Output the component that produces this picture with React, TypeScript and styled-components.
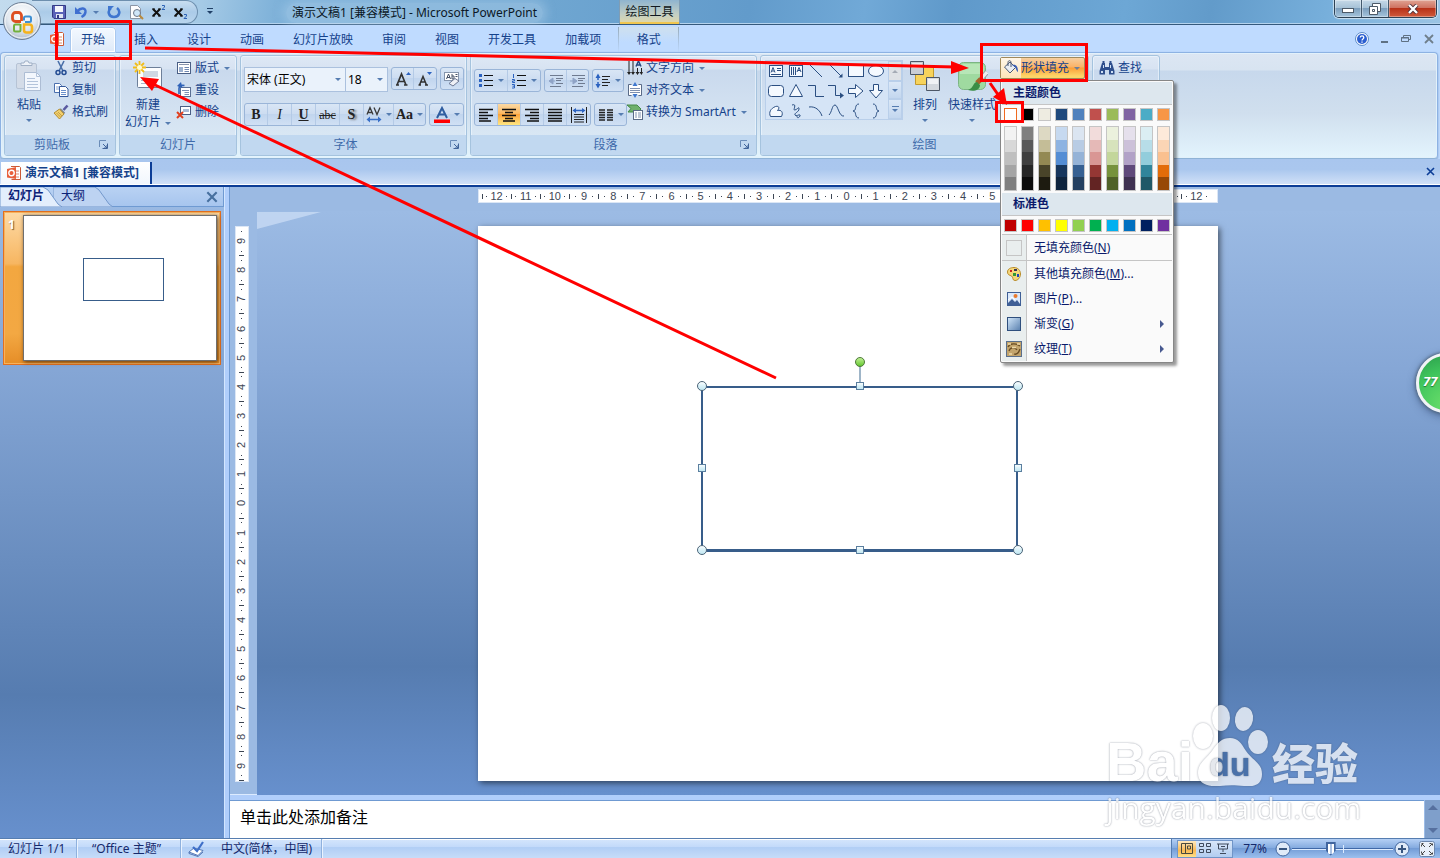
import React from 'react';
import styled, { createGlobalStyle, css } from 'styled-components';

const GlobalStyle = createGlobalStyle`
  *, *::before, *::after { box-sizing: border-box; }
  body {
    margin: 0;
    font-family: "Noto Sans", "Noto Sans CJK SC", sans-serif;
    font-size: 12px;
    line-height: 16px;
    color: #15428b;
    background: #bfdbff;
  }
  button, select, textarea, input { font: inherit; color: inherit; }
  button { background: none; border: 0; padding: 0; margin: 0; }
  svg { display: block; flex: none; }
`;

/* ---------- shell ---------- */

const Window = styled.div`
  position: relative;
  display: flex;
  flex-direction: column;
  min-height: 100vh;
  overflow: hidden;
`;

const Caret = styled.span`
  flex: none;
  width: 0;
  height: 0;
  border: 3px solid transparent;
  border-top-color: #567db1;
  border-bottom-width: 0;
`;

/* ---------- title bar ---------- */

const TitleBar = styled.header`
  display: flex;
  height: 25px;
  border-bottom: 1px solid #35597c;
  box-shadow: inset 0 -1px 0 #b4d3ee;
  background: linear-gradient(100deg, #c3dbee 0, #a5cae6 14%, #79aed7 20%, #6fa6d1 38%, #629bcb 52%, #71a9d7 60%, #5f99ca 66%, #6da7d5 78%, #629bca 84%, #77afdb 92%, #9bc4e4 100%);
`;

const TitleLeft = styled.div`
  display: flex;
  align-items: center;
  width: 619px;
  padding-left: 32px;
`;

const QuickBar = styled.div`
  display: flex;
  align-items: center;
  gap: 8px;
  width: 166px;
  height: 24px;
  padding-left: 20px;
  border: 1px solid #6d8fae;
  border-left: 0;
  border-radius: 0 12px 12px 0;
  background: linear-gradient(#c9def0, #abcbe8 50%, #b9d5ee);
`;

const IconButton = styled.button`
  display: flex;
  align-items: center;
  justify-content: center;
  height: 20px;
  min-width: 10px;
`;

const SplitCaret = styled(IconButton)`
  margin: 0 -2px 0 -5px;
`;

const WindowTitle = styled.h1`
  margin: 2px 0 0 64px;
  padding: 0 6px;
  font-size: 12px;
  font-weight: 400;
  line-height: 20px;
  color: #0b1826;
  white-space: nowrap;
  border-radius: 10px;
  background: rgba(190, 218, 240, 0.35);
  box-shadow: 0 0 10px 4px rgba(190, 218, 240, 0.35);
`;

const ContextTitle = styled.div`
  width: 61px;
  text-align: center;
  white-space: nowrap;
  line-height: 23px;
  color: #101820;
  border: 0 solid #7f9db5;
  border-width: 0 1px;
  box-shadow: inset 0 -2px 0 #f0c64e;
  background: linear-gradient(#8fb4cf, #c3cfc4 60%, #e3d9a6);
`;

const WindowButtons = styled.div`
  display: flex;
  align-self: flex-start;
  margin-left: auto;
  margin-right: 3px;
  border: 1px solid #2d4154;
  border-top: 0;
  border-radius: 0 0 5px 5px;
  overflow: hidden;
  box-shadow: 0 0 1px 1px rgba(255, 255, 255, 0.6);
`;

const WindowButton = styled.button<{ $close?: boolean }>`
  display: flex;
  align-items: center;
  justify-content: center;
  width: ${p => (p.$close ? 47 : 27)}px;
  height: 17px;
  border-right: ${p => (p.$close ? 0 : 1)}px solid #43596c;
  box-shadow: inset 0 0 0 1px rgba(255, 255, 255, 0.35);
  background: ${p => p.$close
    ? 'linear-gradient(#e0a493, #cf7260 45%, #b83218 50%, #cf5a3c)'
    : 'linear-gradient(#c6d9e8, #a7c2d7 45%, #7d9fbd 50%, #a5c4dc)'};
`;

const Orb = styled.button`
  position: absolute;
  left: 2px;
  top: 1px;
  z-index: 3;
`;

/* ---------- tab row ---------- */

const TabRow = styled.nav`
  display: flex;
  align-items: flex-end;
  gap: 1px;
  height: 27px;
  padding-left: 49px;
  background: #bfdbff;
`;

const RibbonTab = styled.button<{ $active?: boolean }>`
  height: 25px;
  margin: 0 3px;
  padding: 0 11px;
  white-space: nowrap;
  border-radius: 4px 4px 0 0;
  ${p => p.$active && css`
    position: relative;
    z-index: 1;
    height: 26px;
    margin-bottom: -1px;
    box-shadow: inset 0 0 0 1px #a9c8ee, inset 0 0 0 2px #fff;
    background: linear-gradient(#f4f9ff, #dde9f8);
  `}
`;

const ContextTab = styled(RibbonTab)`
  width: 61px;
  margin: 0;
  margin-left: 2px;
  border-radius: 0;
  border: solid;
  border-width: 0 1px;
  border-image: linear-gradient(#93a9bd, rgba(147, 169, 189, 0)) 1;
  background: linear-gradient(#cfe0ee, #bfdbff 60%);
`;

const TabIcon = styled.span`
  display: flex;
  align-self: center;
  width: 17px;
`;

const MdiButtons = styled.div`
  display: flex;
  align-self: center;
  align-items: center;
  gap: 8px;
  margin-left: auto;
  padding-right: 4px;
`;

/* ---------- ribbon ---------- */

const Ribbon = styled.section`
  display: flex;
  gap: 3px;
  height: 107px;
  margin-right: 2px;
  padding: 2px 3px;
  border: 1px solid #8db2e3;
  border-bottom-color: #8fb3d6;
  border-radius: 4px;
  box-shadow: 0 1px 2px #7d9cc4, inset 0 0 0 1px #e2f1fb;
  background: linear-gradient(#dce6f3, #d8e4f1 17px, #c7d8ec 18px, #d0dfee 60px, #e3f4fd 100%);
`;

const Group = styled.div<{ $w: number }>`
  display: flex;
  flex: none;
  flex-direction: column;
  width: ${p => p.$w}px;
  border: 1px solid #a5c3de;
  border-radius: 3px;
  box-shadow: inset 0 0 0 1px rgba(240, 248, 255, 0.6);
  background: linear-gradient(#dee8f5, #d7e3f2 13px, #c9d9ed 14px, #d9e7f4 80px);
`;

const GroupBody = styled.div`
  display: flex;
  flex: 1;
  padding: 1px 3px 0;
`;

const GroupLabel = styled.div`
  display: flex;
  align-items: center;
  height: 20px;
  color: #3e6aaa;
  background: #c1d8f0;
  border-radius: 0 0 2px 2px;
  span { flex: 1; text-align: center; }
`;

const Launcher = styled.button`
  width: 16px;
  height: 16px;
`;

const Column = styled.div`
  display: flex;
  flex-direction: column;
`;

const BigButton = styled.button<{ $w: number }>`
  display: flex;
  flex-direction: column;
  align-items: center;
  width: ${p => p.$w}px;
  height: 76px;
  padding-top: 3px;
  white-space: nowrap;
  svg { margin-bottom: 5px; }
  ${Caret} { margin-top: 6px; }
`;

const CaretLine = styled.span`
  display: flex;
  align-items: center;
  gap: 4px;
  margin-top: 1px;
  && ${Caret} { margin-top: 2px; }
`;

const SmallButton = styled.button`
  display: flex;
  align-items: center;
  gap: 3px;
  height: 22px;
  white-space: nowrap;
  ${Caret} { margin-left: 2px; }
`;

const FontBody = styled(Column)`
  gap: 11px;
  padding-top: 10px;
`;

const ParaBody = styled(Column)`
  gap: 11px;
  padding-top: 12px;
`;

const Row = styled.div`
  display: flex;
  gap: 3px;
`;

const Combo = styled.label<{ $w: number }>`
  display: grid;
  width: ${p => p.$w}px;
  height: 25px;
  align-items: center;
  border: 1px solid #abc1de;
  background: #eaf2fb;
  & + & { margin-left: -4px; }
  select, ${Caret} { grid-area: 1 / 1; }
  select {
    width: 100%;
    padding: 0 2px;
    appearance: none;
    border: 0;
    background: none;
    color: #000;
  }
  ${Caret} { justify-self: end; margin-right: 4px; }
`;

const ButtonSet = styled.div`
  display: flex;
  height: 23px;
  border: 1px solid #9ab5d8;
  border-radius: 3px;
  overflow: hidden;
  background: linear-gradient(#d9e6f5, #ccdcf1 48%, #c1d5ee 50%, #d0e0f4);
`;

const Tool = styled.button<{ $w?: number; $on?: boolean }>`
  display: flex;
  align-items: center;
  justify-content: center;
  gap: 4px;
  width: ${p => p.$w ?? 23}px;
  font-family: "Liberation Serif", serif;
  font-size: 14px;
  color: #222;
  border-right: 1px solid #b4cae6;
  &:last-child { border-right: 0; }
  ${p => p.$on && css`background: linear-gradient(#fbd9a5, #fbb65c 48%, #fca43c 50%, #fee782);`}
`;

const Glyph = styled.span<{ $size?: number; $style?: 'bold' | 'italic' | 'underline' | 'strike' | 'shadow' }>`
  font-size: ${p => p.$size ?? 14}px;
  font-weight: ${p => (p.$style === 'italic' || p.$style === 'strike' ? 400 : 700)};
  font-style: ${p => (p.$style === 'italic' ? 'italic' : 'normal')};
  text-decoration: ${p => (p.$style === 'underline' ? 'underline' : p.$style === 'strike' ? 'line-through' : 'none')};
  text-shadow: ${p => (p.$style === 'shadow' ? '2px 1px 2px #777' : 'none')};
`;

const SideColumn = styled(Column)`
  padding-left: 3px;
`;

const Gallery = styled.div`
  display: flex;
  height: 60px;
  margin: 3px 0 0 1px;
  border: 1px solid #b9cfea;
  background: #d5e4f6;
`;

const ShapeGrid = styled.div`
  display: grid;
  grid-template-columns: repeat(6, 20px);
  grid-auto-rows: 20px;
  padding-right: 2px;
  button { display: flex; align-items: center; justify-content: center; }
`;

const GalleryScroll = styled.div`
  display: grid;
  grid-template-rows: 20px 18px 20px;
  width: 14px;
  button {
    display: flex;
    flex-direction: column;
    align-items: center;
    justify-content: center;
    gap: 2px;
    border: 1px solid #b9cfea;
    background: linear-gradient(#dbe8f7, #c3d7ef);
  }
  button:first-child { background: #dfe2e6; }
`;

const UpCaret = styled(Caret)`
  border: 3px solid transparent;
  border-top-width: 0;
  border-bottom-color: #a5abb5;
`;

const FillAnchor = styled.div`
  position: relative;
  z-index: 4;
  margin-left: auto;
`;

const FillButton = styled.button`
  display: flex;
  align-items: center;
  width: 85px;
  height: 22px;
  white-space: nowrap;
  border: 1px solid #a08a5c;
  border-radius: 2px;
  background: linear-gradient(#f6cfa0, #fbb266 45%, #fb9e38 50%, #fdd568 90%);
  svg { width: 20px; height: 20px; padding: 2px; background: linear-gradient(#fff6e8, #fde5b8); }
  ${Caret} { margin-left: 5px; border-top-color: #6c7f9b; }
`;

/* ---------- colour menu ---------- */

const Menu = styled.div`
  position: absolute;
  left: 0;
  top: 23px;
  width: 174px;
  padding: 1px;
  color: #0a1a6b;
  border: 1px solid #868686;
  border-radius: 2px;
  background: #fafafa;
  box-shadow: 3px 3px 3px rgba(0, 0, 0, 0.4);
`;

const MenuHeading = styled.h2`
  margin: 0;
  padding-left: 11px;
  font-size: 12px;
  font-weight: 700;
  line-height: 22px;
  background: #dde7ee;
  border-bottom: 1px solid #c5c5c5;
`;

const SwatchRow = styled.div`
  display: grid;
  grid-template-columns: repeat(10, 13px);
  column-gap: 4px;
  padding: 3px 2px 2px;
`;

const Swatch = styled.button<{ $c: string; $selected?: boolean }>`
  height: 13px;
  border: 1px solid ${p => (p.$selected ? '#f06a20' : '#c5c5c5')};
  background: ${p => p.$c};
`;

const ShadeColumn = styled.div`
  display: flex;
  flex-direction: column;
  height: 65px;
  border: 1px solid #c5c5c5;
`;

const Shade = styled.button<{ $c: string }>`
  flex: 1;
  background: ${p => p.$c};
`;

const MenuItem = styled.button<{ $divided?: boolean }>`
  display: flex;
  align-items: center;
  width: 100%;
  height: 25px;
  text-align: left;
  ${p => p.$divided && css`
    height: 27px;
    border: solid #c5c5c5;
    border-width: 1px 0;
  `}
`;

const MenuGutter = styled.span`
  display: flex;
  align-items: center;
  justify-content: center;
  align-self: stretch;
  width: 25px;
  margin-right: 7px;
  border-right: 1px solid #c5c5c5;
  background: #e9eeee;
`;

const EmptySwatch = styled.span`
  width: 16px;
  height: 16px;
  border: 1px solid #c5c5c5;
`;

const SubArrow = styled.span`
  margin: 0 8px 0 auto;
  border: 4px solid transparent;
  border-left-color: #47598f;
  border-right-width: 0;
`;

/* ---------- document bar ---------- */

const DocBar = styled.div`
  display: flex;
  align-items: flex-start;
  height: 28px;
  padding: 3px 1px 0;
  border-bottom: 2px solid #0c3d96;
  box-shadow: inset 0 -1px 0 #fff;
  background: linear-gradient(#a9c6ee 0, #aac7ee 40%, #d3e2f8);
`;

const DocTab = styled.button`
  display: flex;
  align-items: center;
  gap: 3px;
  height: 22px;
  padding: 0 11px 0 5px;
  font-weight: 700;
  white-space: nowrap;
  border-right: 2px solid #0c3d96;
  background: linear-gradient(#fff, #f1f6fd);
`;

const DocClose = styled.button`
  width: 9px;
  height: 19px;
  margin-left: auto;
  margin-right: 4px;
`;

/* ---------- body ---------- */

const Body = styled.div`
  display: flex;
  flex: 1;
  min-height: 640px;
`;

const deskGradient = 'linear-gradient(#9cbbe4 0, #86a7d6 27%, #567cb0 78%, #6790cd 100%)';

const SlidesPane = styled.aside`
  display: flex;
  flex-direction: column;
  flex: none;
  width: 224px;
  background: ${deskGradient};
`;

const PaneTabs = styled.div`
  display: flex;
  height: 20px;
  border: 1px solid #6f9ad2;
  border-width: 0 1px 1px 0;
  background: linear-gradient(#b9d2f3, #a7c5ee);
`;

const PaneTab = styled.button<{ $active?: boolean }>`
  position: relative;
  z-index: ${p => (p.$active ? 1 : 0)};
  padding: 0 16px 2px 8px;
  margin-right: -7px;
  font-weight: ${p => (p.$active ? 700 : 400)};
  color: #0c2277;
  white-space: nowrap;
  svg { position: absolute; left: 0; top: 0; z-index: -1; }
`;

const PaneClose = styled.button`
  margin: 0 5px 0 auto;
`;

const ThumbCard = styled.button`
  display: flex;
  align-items: stretch;
  width: 218px;
  height: 154px;
  margin: 4px 3px;
  border: 1px solid #e2701f;
  box-shadow: inset 0 0 0 1px #f7b25c;
  background: linear-gradient(#fddaa6, #f7b661 34%, #f3a740 36%, #f3a843 80%, #e58d27);
`;

const ThumbNumber = styled.span`
  width: 19px;
  padding: 5px 0 0 4px;
  text-align: left;
  font-weight: 700;
  color: #fff;
  text-shadow: 1px 1px 1px #7a5a2a;
`;

const ThumbSlide = styled.span`
  position: relative;
  width: 194px;
  height: 146px;
  margin-top: 3px;
  border: 1px solid #6f6f6f;
  background: #fff;
  box-shadow: 1px 1px 4px rgba(60, 30, 0, 0.8);
`;

const ThumbShape = styled.span`
  position: absolute;
  left: 59px;
  top: 42px;
  width: 81px;
  height: 43px;
  border: 1px solid #385d8a;
`;

const Splitter = styled.div`
  flex: none;
  width: 6px;
  border: 1px solid #d3e6ff;
  border-width: 0 1px;
  border-right-color: #6f9ad2;
  background: #b0cefb;
`;

const Editor = styled.main`
  display: flex;
  flex: 1;
  flex-direction: column;
  min-width: 0;
`;

const Desk = styled.div`
  display: grid;
  grid-template-columns: 27px 1fr;
  grid-template-rows: 24px 1fr;
  flex: 1;
  background: #9bbae3;
`;

const HRulerCell = styled.div`
  grid-column: 2;
  display: flex;
  align-items: center;
  justify-content: center;
  padding: 0 2px 6px 0;
`;

const HRuler = styled.div`
  display: flex;
  width: 740px;
  height: 14px;
  padding: 0 6px 0 3px;
  background: #fff;
  border: 1px solid #dbe6f5;
`;

const VRulerCell = styled.div`
  display: flex;
  justify-content: center;
  padding: 15px 4px 0 0;
`;

const VRuler = styled.div`
  display: flex;
  flex-direction: column;
  width: 14px;
  height: 556px;
  background: #fff;
  border: 1px solid #dbe6f5;
`;

const Mark = styled.span<{ $vertical?: boolean }>`
  display: flex;
  flex: 1;
  flex-direction: ${p => (p.$vertical ? 'column-reverse' : 'row')};
  align-items: center;
  justify-content: space-between;
  min-width: 0;
  min-height: 0;
  font-family: "Liberation Sans", sans-serif;
  font-size: 11px;
  line-height: 12px;
  color: #3d4654;
  b { width: 1px; height: 1px; flex: none; background: #3d4654; }
  i {
    flex: none;
    width: ${p => (p.$vertical ? 5 : 1)}px;
    height: ${p => (p.$vertical ? 1 : 5)}px;
    background: #3d4654;
  }
  span { ${p => p.$vertical && 'transform: rotate(-90deg);'} }
`;

const Stage = styled.div`
  position: relative;
  display: flex;
  justify-content: center;
  align-items: flex-start;
  padding: 15px 2px 14px 0;
  background: ${deskGradient};
`;

const Sheen = styled.svg`
  position: absolute;
  left: 0;
  top: 1px;
`;

const Slide = styled.div`
  position: relative;
  width: 740px;
  height: 555px;
  background: #fff;
  box-shadow: 2px 2px 6px rgba(0, 0, 0, 0.55);
`;

const SelectedShape = styled.div`
  position: absolute;
  left: 223px;
  top: 160px;
  width: 317px;
  height: 166px;
  border: 2px solid #385d8a;
  border-bottom-width: 3px;
  svg { position: absolute; left: -8px; top: -32px; }
`;

const NotesRow = styled.div`
  display: flex;
  height: 43px;
  border: solid;
  border-width: 5px 0 0;
  border-color: #b0cefb;
  box-shadow: 0 -1px 0 #dcebff;
  background: #fff;
`;

const Notes = styled.textarea`
  flex: 1;
  height: 37px;
  padding: 5px 10px;
  font-size: 16px;
  line-height: 22px;
  color: #000;
  resize: none;
  border: 0;
  outline: 0;
  overflow: hidden;
  border-top: 1px solid #6f9ad2;
  background: #fff;
`;

const NotesScroll = styled.div`
  display: flex;
  flex-direction: column;
  justify-content: space-between;
  align-items: center;
  width: 16px;
  padding: 5px 0;
  border-left: 1px solid #9dbce6;
  background: #7f9fcb;
  span { border: 5px solid transparent; border-bottom-color: #56709f; border-top-width: 0; }
  span:last-child { border-width: 5px 5px 0; border-top-color: #56709f; }
`;

/* ---------- status bar ---------- */

const StatusBar = styled.footer`
  display: flex;
  align-items: stretch;
  height: 20px;
  color: #15296b;
  border-top: 1px solid #567db0;
  box-shadow: inset 0 1px 0 #fff;
  background: linear-gradient(#d5e6fc, #c3dafa 40%, #b1cef5 45%, #c6dcf9);
`;

const StatusCell = styled.div<{ $w: number; $pad: number }>`
  display: flex;
  align-items: center;
  gap: 16px;
  width: ${p => p.$w}px;
  padding-left: ${p => p.$pad}px;
  line-height: 18px;
  white-space: nowrap;
  border-right: 1px solid #8fb1de;
  box-shadow: 1px 0 0 #eaf3ff;
`;

const StatusRight = styled.div`
  display: flex;
  align-items: center;
  gap: 8px;
  margin-left: auto;
  padding: 0 4px 0 5px;
  border-left: 1px solid #567db0;
  background: linear-gradient(#b5d0f5, #86ace0 45%, #739cd6 50%, #9cc0ee);
`;

const ViewButtons = styled.div`
  display: flex;
  height: 18px;
  margin-right: 2px;
  border: 1px solid #7095c8;
  background: linear-gradient(#d8e6f8, #b3cdf0);
`;

const ViewButton = styled.button<{ $on?: boolean }>`
  display: flex;
  align-items: center;
  justify-content: center;
  width: 18px;
  ${p => p.$on && css`background: linear-gradient(#fde8bf, #f9b851 60%, #fee18a);`}
`;

const ZoomSlider = styled.input`
  appearance: none;
  width: 101px;
  height: 16px;
  margin: 0 -7px;
  background:
    linear-gradient(#dcebff, #dcebff) 51px 50% / 1px 8px no-repeat,
    linear-gradient(#3f68a8 50%, #dcebff 50%) 0 50% / 100% 2px no-repeat;
  &::-webkit-slider-thumb {
    appearance: none;
    width: 10px;
    height: 14px;
    border: 2px solid #41669f;
    clip-path: polygon(0 0, 100% 0, 100% 65%, 50% 100%, 0 65%);
    background: linear-gradient(90deg, #fff 30%, #a9c1e4 30% 70%, #fff 70%);
  }
`;

/* ---------- overlays ---------- */

const Annotations = styled.svg`
  position: absolute;
  left: 0;
  top: 0;
  z-index: 6;
  pointer-events: none;
`;

const FloatBall = styled.div`
  position: absolute;
  right: -36px;
  top: 353px;
  z-index: 5;
  width: 60px;
  height: 60px;
  padding-left: 4px;
  font-size: 13px;
  font-weight: 700;
  font-style: italic;
  line-height: 50px;
  color: #fff;
  border: 3px solid #f1f3f5;
  border-radius: 50%;
  background: radial-gradient(circle at 50% 90%, #6ade6a, #3fc45c 60%, #2a9d4b);
  box-shadow: 0 0 3px 1px #51687f, 0 3px 8px rgba(30, 50, 90, 0.5);
  text-shadow: 0 1px 1px #1c7534;
`;

const Watermark = styled.div`
  position: absolute;
  right: 78px;
  bottom: 32px;
  z-index: 5;
  width: 256px;
  color: #fff;
  opacity: 0.74;
  pointer-events: none;
  text-shadow: 0 0 2px rgba(60, 70, 90, 0.6), 0 0 1px rgba(60, 70, 90, 0.4);
  svg { filter: drop-shadow(0 0 1px rgba(60, 70, 90, 0.6)); }
`;

const MarkRow = styled.div`
  display: flex;
  align-items: flex-end;
  height: 88px;
  padding-bottom: 4px;
`;

const MarkLatin = styled.span`
  width: 86px;
  font-family: "Liberation Sans", sans-serif;
  font-size: 56px;
  font-weight: 700;
  line-height: 48px;
`;

const MarkHan = styled.span`
  margin-left: 4px;
  font-family: "Noto Sans CJK SC", sans-serif;
  font-size: 43px;
  font-weight: 900;
  line-height: 50px;
`;

const MarkUrl = styled.div`
  font-family: "Open Sans", sans-serif;
  font-size: 30px;
  line-height: 36px;
`;

/* ---------- icons ---------- */

type IconProps = { children: React.ReactNode; w?: number; h?: number; box?: string };
const Icon = ({ children, w = 16, h = 16, box }: IconProps) => (
  <svg width={w} height={h} viewBox={box ?? `0 0 ${w} ${h}`} fill="none" aria-hidden="true">{children}</svg>
);

const OfficeOrb = () => (
  <Icon w={40} h={40}>
    <defs>
      <radialGradient id="orb" cx="50%" cy="35%" r="65%">
        <stop offset="0" stopColor="#fff" /><stop offset="0.6" stopColor="#e3e9f0" /><stop offset="1" stopColor="#aebccc" />
      </radialGradient>
    </defs>
    <circle cx="20" cy="20" r="18.5" fill="url(#orb)" stroke="#6e7f95" />
    <circle cx="20" cy="20" r="17" stroke="#fff" strokeOpacity="0.8" />
    <path d="M19 20.500h-5.500a3 3 0 0 1-3-3v-3a3 3 0 0 1 3-3h3a3 3 0 0 1 3 3V20" stroke="#dd4f22" strokeWidth="2.800" />
    <path d="M22 19.500v-2.500q0-1.500 1.500-1.500h4q1.500 0 1.500 1.500v2.500q0 1.500-1.500 1.500H23" stroke="#3f8fd2" strokeWidth="2" />
    <path d="M18.500 23v6q0 1.500-1.500 1.500h-3.500Q12 30.500 12 29v-4q0-1.500 1.500-1.500H18" stroke="#72b03c" strokeWidth="2" />
    <path d="M22 23.500h5.500q2.500 0 2.500 2.500v3q0 2.500-2.500 2.500h-3Q22 31.500 22 29z" stroke="#f5b21c" strokeWidth="2.600" />
  </Icon>
);

const SaveIcon = () => (
  <Icon w={14} h={14}>
    <path d="M.5.5h13v13H2L.5 12z" fill="#5a62b8" stroke="#343a86" />
    <path d="M3 1h8v6H3z" fill="#f4f6fc" /><path d="M4 9h7v4H4z" fill="#dfe4f2" /><path d="M5 10h2v3H5z" fill="#343a86" />
  </Icon>
);
const UndoIcon = () => (
  <Icon w={14} h={14}>
    <path d="M3 6.500C7 2 12 3 11.500 7c-.3 2.500-2 4-4 5" stroke="#3f6fd0" strokeWidth="2.400" />
    <path d="M1 2v7h7z" fill="#3f6fd0" />
  </Icon>
);
const RedoIcon = () => (
  <Icon w={14} h={14}>
    <path d="M10 3c4 3 2.500 9-3 9S0 6 4 3" stroke="#3f76cf" strokeWidth="2.600" />
    <path d="M7 1H1v6z" fill="#3f76cf" />
  </Icon>
);
const PreviewIcon = () => (
  <Icon w={15} h={15}>
    <path d="M1.500.5h7l3 3v10h-10z" fill="#fdfdfe" stroke="#8b95a5" />
    <circle cx="8" cy="8" r="3.500" fill="#cfe6f8" stroke="#6d7787" /><path d="M10.500 10.500l3.500 3.500" stroke="#b98a3d" strokeWidth="2" />
  </Icon>
);
const SuperIcon = ({ sub }: { sub?: boolean }) => (
  <Icon w={14} h={14}>
    <path d="M1 4l7 7M8 4l-7 7" stroke="#111" strokeWidth="2" />
    <path d="M0 4h3M6 4h3M0 11h3M6 11h3" stroke="#111" />
    <path d={sub ? 'M10 9.500h2.500v1.500L10 13.500h3' : 'M10 .5h2.500v1.500L10 4.500h3'} stroke="#2d62b5" />
  </Icon>
);
const PowerPointIcon = () => (
  <Icon>
    <path d="M5 1.500h8.500l1 1v12h-9" fill="#fff" stroke="#cc5a36" />
    <path d="M1 4l9-2v12l-9-1.500z" fill="#e8603c" /><circle cx="5.500" cy="8" r="2.700" stroke="#fff" strokeWidth="1.400" />
    <path d="M10 6h3M10 9h3M10 12h3" stroke="#d98a70" />
  </Icon>
);
const PasteIcon = () => (
  <Icon w={30} h={32}>
    <rect x="2.500" y="3.500" width="20" height="25" rx="1.500" fill="#d4dce8" stroke="#b6c3d5" />
    <path d="M7 5.500V3h3l1-2h3l1 2h3v2.500z" fill="#eef2f8" stroke="#9fafc5" />
    <path d="M10.500 12.500h12l4 4v14h-16z" fill="#f3f7fd" stroke="#adbdd4" />
    <path d="M22.500 12.500v4h4M13 18.500h8M13 21.500h11M13 24.500h11M13 27.500h11" stroke="#b3c3da" />
  </Icon>
);
const CutIcon = () => (
  <Icon>
    <path d="M5 1l5 10M11 1L6 11" stroke="#4a6fa8" strokeWidth="1.600" />
    <circle cx="5" cy="12.500" r="2" stroke="#244c93" strokeWidth="1.500" /><circle cx="11" cy="12.500" r="2" stroke="#244c93" strokeWidth="1.500" />
  </Icon>
);
const CopyIcon = () => (
  <Icon>
    <path d="M1.500 1.500h5l2 2v7h-7z" fill="#fff" stroke="#4a6fae" /><path d="M3 5h4M3 7h4" stroke="#88a5d0" />
    <path d="M6.500 4.500h6l2.500 2.500v7.500H6.500z" fill="#fff" stroke="#34599c" /><path d="M8 8.500h5M8 10.500h5M8 12.500h5" stroke="#6a90cb" />
  </Icon>
);
const BrushIcon = () => (
  <Icon>
    <path d="M14.500 1.500l-4 4.500" stroke="#5a5aa0" strokeWidth="2.600" /><path d="M7 5l4.500 4.500" stroke="#7d8794" strokeWidth="2" />
    <path d="M6.500 5L1 9l5.500 6L11 10z" fill="#f1cf6d" stroke="#b28d35" /><path d="M3.500 9l4 4M5 8l4 4" stroke="#b28d35" strokeWidth=".7" />
  </Icon>
);
const NewSlideIcon = () => (
  <Icon w={32} h={32}>
    <rect x="5.500" y="7.500" width="24" height="20" rx="1" fill="#fcfdff" stroke="#6d7f99" />
    <path d="M11 11h15v6H11z" fill="#cfd7e3" /><path d="M9 20.500h13M9 23.500h13" stroke="#a9b6c9" />
    <path d="M7.500 1v13M1 7.500h13M3 3l9 9M12 3l-9 9" stroke="#f2bd18" strokeWidth="1.800" /><circle cx="7.500" cy="7.500" r="2.500" fill="#fffbd0" />
  </Icon>
);
const LayoutIcon = () => (
  <Icon>
    <rect x="1.500" y="2.500" width="13" height="11" fill="#fff" stroke="#4a5f85" />
    <path d="M3 4.500h10" stroke="#8793ab" /><path d="M3 7h4v5H3z" fill="#9cb0cf" /><path d="M8.500 7.500H13M8.500 9.500H13M8.500 11.500H13" stroke="#6f87b0" />
  </Icon>
);
const ResetIcon = () => (
  <Icon>
    <rect x="4.500" y="5.500" width="10" height="9" fill="#fff" stroke="#5b6f94" />
    <path d="M6 8.500h7M8.500 10.500H13M8.500 12.500H13" stroke="#7b90b4" /><path d="M3 12V6.500C3 4 5 3 8.500 3.500" stroke="#2f62b8" strokeWidth="1.600" /><path d="M1 4l4-4 1.500 6z" fill="#2f62b8" />
  </Icon>
);
const DeleteIcon = () => (
  <Icon>
    <rect x="4.500" y="2.500" width="10" height="8" fill="#fff" stroke="#4a5f85" /><path d="M7 5h6v3H7z" fill="#a9bbd6" />
    <path d="M1 8l6 6M7 8l-6 6" stroke="#e0401f" strokeWidth="2" />
  </Icon>
);
const EraseIcon = () => (
  <Icon w={18} h={18}>
    <rect x="1.500" y="2.500" width="14" height="8" fill="#fff" stroke="#8595ad" />
    <path d="M3.500 9l2-5 2 5M4 7.500h3M9 4v5h2V6H9M12.500 4.500h2M12.500 6.500h2" stroke="#445066" />
    <path d="M6 13.500l6-5 4 2.500-6 5z" fill="#eef0f6" stroke="#6d7894" />
  </Icon>
);
const SpacingAvIcon = () => (
  <Icon w={16} h={18}>
    <path d="M1 8.500L4 1.500l3 7M2 6.500h4M8 1.500l3 7 3-7" stroke="#3a3a3a" strokeWidth="1.300" /><path d="M2 13.500h12" stroke="#3a70c8" strokeWidth="1.500" />
    <path d="M4 10.500v6l-3.500-3zM12 10.500v6l3.500-3z" fill="#3a70c8" />
  </Icon>
);
const FontColorIcon = () => (
  <Icon w={16} h={18}>
    <path d="M3 12L8 2l5 10M5 8.500h6" stroke="#2f5da0" strokeWidth="2" /><path d="M0 13.500h16v3.500H0z" fill="#f00" />
  </Icon>
);
const BulletIcon = ({ numbered }: { numbered?: boolean }) => (
  <Icon>
    <path d="M6 2.500h9M6 7.500h9M6 12.500h9" stroke="#111" />
    {numbered
      ? <path d="M2.500 1v4M1 6.500h2.500v1.500H1.500v1.500H4M1 11.500h2.500v3.500H1M1.500 13.200H3.500" stroke="#2b62c0" />
      : <path d="M1 1h3v3H1zM1 6h3v3H1zM1 11h3v3H1z" fill="#2b62c0" />}
  </Icon>
);
const IndentIcon = ({ more }: { more?: boolean }) => (
  <Icon>
    <path d="M2 2.500h13M8 5.500h7M8 7.500h5M8 10.500h7M2 13.500h11" stroke="#6f7b90" />
    <path d={more ? 'M3 5v6l4-3zM0 8h4' : 'M5 5v6L1 8zM4 8h3'} fill="#8fa3c6" stroke="#8fa3c6" />
  </Icon>
);
const LineSpacingIcon = () => (
  <Icon>
    <path d="M7 3.500h8M7 6.500h6M7 9.500h8M7 12.500h6" stroke="#222" /><path d="M3 3v10" stroke="#2b62c0" strokeWidth="1.500" strokeDasharray="4 2" />
    <path d="M.5 5L3 .5 5.500 5zM.5 11L3 15.500 5.500 11z" fill="#2b62c0" />
  </Icon>
);
const alignPaths = {
  left: 'M1 2.500h14M1 5.500h9M1 8.500h14M1 11.500h9M1 14h12',
  center: 'M1 2.500h14M4 5.500h8M1 8.500h14M4 11.500h8M2 14h12',
  right: 'M1 2.500h14M6 5.500h9M1 8.500h14M6 11.500h9M3 14h12',
  justify: 'M1 2.500h14M1 5.500h14M1 8.500h14M1 11.500h14M1 14h14',
};
const AlignIcon = ({ kind }: { kind: keyof typeof alignPaths }) => (
  <Icon><path d={alignPaths[kind]} stroke="#111" strokeWidth="1.400" /></Icon>
);
const DistributeIcon = () => (
  <Icon>
    <path d="M.5 0v16M15.500 0v16M3 7.500h10M3 10h10M3 12.500h10M3 15h10" stroke="#222" /><path d="M3 3.500h10" stroke="#2b62c0" strokeWidth="1.400" />
    <path d="M5 1v5L1.500 3.500zM11 1v5l3.500-2.500z" fill="#2b62c0" />
  </Icon>
);
const ColumnsIcon = () => (
  <Icon><path d="M1 3h6M1 5.500h6M1 8h6M1 10.500h6M1 13h6M9 3h6M9 5.500h6M9 8h6M9 10.500h6M9 13h6" stroke="#222" strokeWidth="1.300" /></Icon>
);
const TextDirIcon = () => (
  <Icon>
    <path d="M2 1v12M6 1v12M10.500 8v5M14.500 8v5" stroke="#222" /><path d="M0 12h4l-2 3zM4 12h4l-2 3zM8.500 12h4l-2 3zM12.500 12h3.500l-1.500 3z" fill="#222" />
    <path d="M9 6.500l2.500-5.500L14 6.500M10 5h3" stroke="#26477f" strokeWidth="1.500" />
  </Icon>
);
const AlignTextIcon = () => (
  <Icon>
    <path d="M4.500 2.500h-3v11h3M11.500 2.500h3v11h-3" stroke="#5a6b88" /><path d="M2 3h12v10H2z" fill="#fff" />
    <path d="M3 6.500h10M3 8.500h10M3 10.500h10" stroke="#7e8fae" /><path d="M5.500 4L8 0l2.500 4zM5.500 12L8 16l2.500-4z" fill="#3f78cf" />
  </Icon>
);
const SmartArtIcon = () => (
  <Icon>
    <path d="M0 1h10l4 4-3 3H1l3-3.500z" fill="#6fb06c" stroke="#468a49" /><rect x="6.500" y="6.500" width="9" height="9" fill="#fff" stroke="#5a6b88" />
    <path d="M8 9h2M8 11h2M8 13h2M11 9h3M11 11h3M11 13h3" stroke="#7e8fae" />
  </Icon>
);
const ArrangeIcon = () => (
  <Icon w={32} h={32}>
    <path d="M6.500 6.500h18v18h-18z" fill="#f7d35c" stroke="#c39a2d" />
    <path d="M1.500 1.500h13v13h-13z" fill="#c9cdd4" stroke="#4d5766" /><path d="M3 3h10v5H3z" fill="#e8eaee" />
    <path d="M17.500 17.500h13v13h-13z" fill="#d4d8de" stroke="#4d5766" /><path d="M19 19h10v5H19z" fill="#f1f2f5" />
  </Icon>
);
const QuickStyleIcon = () => (
  <Icon w={32} h={32}>
    <rect x="2.500" y="2.500" width="27" height="27" rx="5" fill="#9fdaa0" stroke="#7cb584" /><path d="M4 8q0-4 4-4h16q4 0 4 4v6H4z" fill="#c2ebc0" opacity=".7" />
    <path d="M31 12l-6 7" stroke="#9aa0a8" strokeWidth="5" /><path d="M31 12l-6 7" stroke="#eceef1" strokeWidth="3" />
    <path d="M25 19l-4 4" stroke="#a5622b" strokeWidth="5" /><path d="M21 22c-4 0-3 6-9 8 6 2 12 0 12-5z" fill="#3a8e45" />
  </Icon>
);
const BucketIcon = () => (
  <Icon>
    <path d="M1.500 7L7 2l5.500 5.500L7 13z" fill="#e9edf3" stroke="#4b5a75" /><path d="M5 6V2.500C5 0 8 0 8 2.500V7" stroke="#4b5a75" />
    <path d="M9 5c4-1 6 1 6 7-2-1-2-4-3-5z" fill="#3b5fb4" />
  </Icon>
);
const FindIcon = () => (
  <Icon>
    <path d="M3 3h3v4h4V3h3l2.500 8v3.500h-5.500V10H6v4.500H.5V11z" fill="#2f4f8d" /><path d="M3.500 1h2v2h-2zM10.500 1h2v2h-2z" fill="#2f4f8d" />
    <path d="M2 11h2v2H2zM12 11h2v2h-2zM4 5h1v3H4zM11 5h1v3h-1z" fill="#cfe0f5" />
  </Icon>
);
const LauncherIcon = () => (
  <Icon w={10} h={10}>
    <path d="M.5 7V.5H7" stroke="#6a8cb8" /><path d="M3.500 8.500h5v-5" stroke="#40649a" /><path d="M4 4l4 4M8 5v3H5" stroke="#40649a" />
  </Icon>
);
const CloseGlyph = ({ size = 9, color = '#0c3d96' }: { size?: number; color?: string }) => (
  <Icon w={size} h={size} box="0 0 9 9"><path d="M1 1l7 7M8 1L1 8" stroke={color} strokeWidth="1.600" /></Icon>
);
const HelpIcon = () => (
  <Icon w={14} h={14}>
    <circle cx="7" cy="7" r="6.500" fill="#fff" stroke="#5a8ac8" /><circle cx="7" cy="7" r="5" fill="#2b5fd0" />
    <path d="M5.300 5.500c0-2.300 3.500-2.200 3.500 0C8.800 7 7 6.800 7 8.400M7 9.500v1.300" stroke="#fff" strokeWidth="1.300" />
  </Icon>
);
const PaletteIcon = () => (
  <Icon>
    <path d="M8 1.500c4 0 6.500 3 6.500 6.500S12 14.500 9 14.500 7.500 11 5.500 10 1.500 9 1.500 6 4.500 1.500 8 1.500z" fill="#f6d77a" stroke="#b98d2d" />
    <path d="M4 4h2v2H4z" fill="#c22" /><path d="M8 3h3v2H8z" fill="#335" /><path d="M7 7h3v3H7z" fill="#393" /><path d="M11 8h2v3h-2z" fill="#24b" />
  </Icon>
);
const PictureIcon = () => (
  <Icon>
    <rect x="1.500" y="1.500" width="13" height="13" fill="#dbe9fb" stroke="#3f5f96" /><circle cx="9.500" cy="5" r="2" fill="#ea7a2c" />
    <path d="M2 12l4-4 3 3 2-2 3 4v1.500H2z" fill="#3f5f96" /><path d="M2 9l4-3 3 3" stroke="#fff" />
  </Icon>
);
const GradientIcon = () => (
  <Icon>
    <defs><linearGradient id="gradChip" x1="0" y1="0" x2="1" y2="1"><stop stopColor="#d3e8fb" /><stop offset="1" stopColor="#587fae" /></linearGradient></defs>
    <rect x="1.500" y="1.500" width="13" height="13" fill="url(#gradChip)" stroke="#2f4f7d" />
  </Icon>
);
const TextureIcon = () => (
  <Icon>
    <rect x=".5" y=".5" width="15" height="15" fill="#c3a46c" stroke="#5a6f8d" />
    <path d="M2 6c2-4 8-4 12-1M3 10c1-4 6-4 8-1M8 13c3 1 5-2 6-5" stroke="#6a4d24" strokeWidth="1.300" /><path d="M2 3h3M6 6.500h4M3 13h3M11 3h3" stroke="#eed9a8" strokeWidth="1.500" />
  </Icon>
);
const SpellIcon = () => (
  <Icon w={17}>
    <path d="M1 11l5-4 9 2.500-5 5z" fill="#fff" stroke="#5477b5" /><path d="M1 11v1.500l9 3 5-4.500" stroke="#5477b5" /><path d="M5 6l4 4 6-9" stroke="#3f6fc8" strokeWidth="2.200" />
  </Icon>
);

const stroke = { stroke: '#2b4f82', fill: 'none' } as const;
const solid = { stroke: '#2b4f82', fill: '#f4f9ff' } as const;
const shapes: [string, React.ReactNode][] = [
  ['文本框', <><rect x="1.500" y="2.500" width="13" height="11" {...solid} /><path d="M3 9.500l2-5 2 5M4 8h2M9 5.500h4M9 7.500h4M3 11.500h10" {...stroke} /></>],
  ['竖排文本框', <><rect x="1.500" y="2.500" width="13" height="11" {...solid} /><path d="M9 9l2-4.500L13 9M10 7.500h2M3.500 4v8M5.500 4v8M7.500 4v8" {...stroke} /></>],
  ['直线', <path d="M2 2l12 12" {...stroke} />],
  ['箭头', <><path d="M2 2l11 11" {...stroke} /><path d="M14.500 14.500v-4l-4 4z" fill="#2b4f82" /></>],
  ['矩形', <rect x=".5" y="2.500" width="15" height="11" {...solid} />],
  ['椭圆', <ellipse cx="8" cy="8" rx="7.500" ry="5.500" {...solid} />],
  ['圆角矩形', <rect x=".5" y="2.500" width="15" height="11" rx="3" {...solid} />],
  ['三角形', <path d="M8 1.500l6.500 12h-13z" {...solid} />],
  ['肘形连接符', <path d="M0 2.500h7.500v11H16" {...stroke} />],
  ['肘形箭头', <><path d="M0 2.500h7.500v10H13" {...stroke} /><path d="M12 9.500v6l4-3z" fill="#2b4f82" /></>],
  ['右箭头', <path d="M.5 5.500h7v-4L15 8l-7.500 6.500v-4h-7z" {...solid} />],
  ['下箭头', <path d="M5.500 1.500h5v6h4L8 15 1.500 7.500h4z" {...solid} />],
  ['任意多边形', <path d="M2.500 13.500c-2-4 0-8 5-10 4-1 4 2 2 4 4-1 6 2 4 6z" {...solid} />],
  ['自由曲线', <path d="M4 2c6-2 0 6 3 5s4-4 4-1-5 4-4 6 4-1 5 0-3 5-3 1" {...stroke} />],
  ['弧形', <path d="M1 4c6-1 11 3 13 9" {...stroke} />],
  ['曲线', <path d="M1 12C4 9 4 2 7 2s4 12 9 11" {...stroke} />],
  ['左大括号', <path d="M11 1C6 1 9 8 5 8c4 0 1 7 6 7" {...stroke} />],
  ['右大括号', <path d="M5 1c5 0 2 7 6 7-4 0-1 7-6 7" {...stroke} />],
];

/* ---------- data ---------- */

const tabs = ['插入', '设计', '动画', '幻灯片放映', '审阅', '视图', '开发工具', '加载项'];

const theme: [string, string[]][] = [
  ['#ffffff', ['#f2f2f2', '#d8d8d8', '#bfbfbf', '#a5a5a5', '#7f7f7f']],
  ['#000000', ['#7f7f7f', '#595959', '#3f3f3f', '#262626', '#0c0c0c']],
  ['#eeece1', ['#ddd9c3', '#c4bd97', '#938953', '#494429', '#1d1b10']],
  ['#1f497d', ['#c6d9f0', '#8db3e2', '#548dd4', '#17365d', '#0f243e']],
  ['#4f81bd', ['#dbe5f1', '#b8cce4', '#95b3d7', '#366092', '#244061']],
  ['#c0504d', ['#f2dcdb', '#e5b9b7', '#d99694', '#953734', '#632423']],
  ['#9bbb59', ['#ebf1dd', '#d7e3bc', '#c3d69b', '#76923c', '#4f6128']],
  ['#8064a2', ['#e5e0ec', '#ccc1d9', '#b2a2c7', '#5f497a', '#3f3151']],
  ['#4bacc6', ['#dbeef3', '#b7dde8', '#92cddc', '#31859b', '#205867']],
  ['#f79646', ['#fdeada', '#fbd5b5', '#fac08f', '#e36c09', '#974806']],
];
const standard = ['#c00000', '#ff0000', '#ffc000', '#ffff00', '#92d050', '#00b050', '#00b0f0', '#0070c0', '#002060', '#7030a0'];

const range = (n: number) => Array.from({ length: 2 * n + 1 }, (_, i) => Math.abs(i - n));

const RulerMarks = ({ n, vertical }: { n: number; vertical?: boolean }) => (
  <>{range(n).map((v, i) => <Mark key={i} $vertical={vertical}><i /><b /><span>{v}</span><b /><span /></Mark>)}</>
);

/* ---------- parts ---------- */

const RibbonGroup = ({ label, w, launcher, children }: { label: string; w: number; launcher?: boolean; children: React.ReactNode }) => (
  <Group $w={w}>
    <GroupBody>{children}</GroupBody>
    <GroupLabel>
      <span>{label}</span>
      {launcher && <Launcher aria-label={`${label}选项`}><LauncherIcon /></Launcher>}
    </GroupLabel>
  </Group>
);

const ColorMenu = () => (
  <Menu>
    <MenuHeading>主题颜色</MenuHeading>
    <SwatchRow>{theme.map(([c], i) => <Swatch key={c} $c={c} $selected={i === 0} aria-label={c} />)}</SwatchRow>
    <SwatchRow>
      {theme.map(([c, list]) => (
        <ShadeColumn key={c}>{list.map(s => <Shade key={s} $c={s} aria-label={s} />)}</ShadeColumn>
      ))}
    </SwatchRow>
    <MenuHeading>标准色</MenuHeading>
    <SwatchRow>{standard.map(c => <Swatch key={c} $c={c} aria-label={c} />)}</SwatchRow>
    <MenuItem $divided><MenuGutter><EmptySwatch /></MenuGutter><span>无填充颜色(<u>N</u>)</span></MenuItem>
    <MenuItem><MenuGutter><PaletteIcon /></MenuGutter><span>其他填充颜色(<u>M</u>)...</span></MenuItem>
    <MenuItem><MenuGutter><PictureIcon /></MenuGutter><span>图片(<u>P</u>)...</span></MenuItem>
    <MenuItem><MenuGutter><GradientIcon /></MenuGutter><span>渐变(<u>G</u>)</span><SubArrow /></MenuItem>
    <MenuItem><MenuGutter><TextureIcon /></MenuGutter><span>纹理(<u>T</u>)</span><SubArrow /></MenuItem>
  </Menu>
);

const Handles = () => (
  <svg width="330" height="202" aria-hidden="true">
    <defs>
      <linearGradient id="knob" x1="0" y1="0" x2="0" y2="1"><stop stopColor="#fff" /><stop offset="0.5" stopColor="#d9f1f8" /><stop offset="1" stopColor="#bfe6f1" /></linearGradient>
      <linearGradient id="spin" x1="0" y1="0" x2="0" y2="1"><stop stopColor="#c5f29a" /><stop offset="1" stopColor="#5fc52a" /></linearGradient>
    </defs>
    <path d="M165 8v24" stroke="#7f9cb6" strokeWidth="1.500" />
    <g fill="url(#knob)" stroke="#4c6478">
      <circle cx="7" cy="30" r="4.500" /><circle cx="323" cy="30" r="4.500" />
      <circle cx="7" cy="194" r="4.500" /><circle cx="323" cy="194" r="4.500" />
      <g stroke="#5b7f9f">
        <rect x="161.500" y="26.500" width="7" height="7" /><rect x="161.500" y="190.500" width="7" height="7" />
        <rect x="3.500" y="108.500" width="7" height="7" /><rect x="319.500" y="108.500" width="7" height="7" />
      </g>
    </g>
    <circle cx="165" cy="6" r="4.500" fill="url(#spin)" stroke="#4f7a3d" />
  </svg>
);

export default function App() {
  return (
    <Window>
      <GlobalStyle />
      <TitleBar>
        <TitleLeft>
          <QuickBar>
            <IconButton aria-label="保存"><SaveIcon /></IconButton>
            <IconButton aria-label="撤消"><UndoIcon /></IconButton>
            <SplitCaret aria-label="撤消列表"><Caret /></SplitCaret>
            <IconButton aria-label="重复"><RedoIcon /></IconButton>
            <IconButton aria-label="打印预览"><PreviewIcon /></IconButton>
            <IconButton aria-label="上标"><SuperIcon /></IconButton>
            <IconButton aria-label="下标"><SuperIcon sub /></IconButton>
          </QuickBar>
          <IconButton aria-label="自定义快速访问工具栏">
            <Icon w={24} h={8}><path d="M9 .5h6" stroke="#1f3f66" /><path d="M9 3h6l-3 3z" fill="#1f3f66" /></Icon>
          </IconButton>
          <WindowTitle>演示文稿1 [兼容模式] - Microsoft PowerPoint</WindowTitle>
        </TitleLeft>
        <ContextTitle>绘图工具</ContextTitle>
        <WindowButtons>
          <WindowButton aria-label="最小化"><Icon w={12} h={10}><rect x=".5" y="4.500" width="11" height="4" fill="#fff" stroke="#4d5a68" /></Icon></WindowButton>
          <WindowButton aria-label="向下还原"><Icon w={12} h={12}><path d="M3.500.5h8v8h-8z" fill="#fff" stroke="#4d5a68" /><path d="M.5 3.500h8v8h-8z" fill="#fff" stroke="#4d5a68" /><path d="M3.500 6.500h2v2h-2z" stroke="#4d5a68" /></Icon></WindowButton>
          <WindowButton $close aria-label="关闭"><Icon w={12} h={10}><path d="M2 1l8 8M10 1L2 9" stroke="#4d3038" strokeWidth="4" /><path d="M2 1l8 8M10 1L2 9" stroke="#fff" strokeWidth="2.400" /></Icon></WindowButton>
        </WindowButtons>
      </TitleBar>
      <Orb aria-label="Office 按钮"><OfficeOrb /></Orb>

      <TabRow>
        <TabIcon><PowerPointIcon /></TabIcon>
        <RibbonTab $active>开始</RibbonTab>
        {tabs.map(t => <RibbonTab key={t}>{t}</RibbonTab>)}
        <ContextTab>格式</ContextTab>
        <MdiButtons>
          <IconButton aria-label="帮助"><HelpIcon /></IconButton>
          <IconButton aria-label="最小化文档"><Icon w={14} h={10}><path d="M4 8h7" stroke="#5f7183" strokeWidth="2" /></Icon></IconButton>
          <IconButton aria-label="还原文档"><Icon w={14} h={10}><path d="M4.500 3V1.500h7v4H10" stroke="#5f7183" /><path d="M2.500 3.500h7v4h-7z" stroke="#5f7183" /><path d="M2 4h8" stroke="#5f7183" /></Icon></IconButton>
          <IconButton aria-label="关闭文档"><Icon w={15} h={10}><path d="M4 1l8 8M12 1L4 9" stroke="#6f7f8c" strokeWidth="1.800" /></Icon></IconButton>
        </MdiButtons>
      </TabRow>

      <Ribbon>
        <RibbonGroup label="剪贴板" w={112} launcher>
          <BigButton $w={42}><PasteIcon />粘贴<Caret /></BigButton>
          <SideColumn>
            <SmallButton><CutIcon />剪切</SmallButton>
            <SmallButton><CopyIcon />复制</SmallButton>
            <SmallButton><BrushIcon />格式刷</SmallButton>
          </SideColumn>
        </RibbonGroup>
        <RibbonGroup label="幻灯片" w={118}>
          <BigButton $w={50}><NewSlideIcon />新建<CaretLine>幻灯片<Caret /></CaretLine></BigButton>
          <SideColumn>
            <SmallButton><LayoutIcon />版式<Caret /></SmallButton>
            <SmallButton><ResetIcon />重设</SmallButton>
            <SmallButton><DeleteIcon />删除</SmallButton>
          </SideColumn>
        </RibbonGroup>
        <RibbonGroup label="字体" w={227} launcher>
          <FontBody>
            <Row>
              <Combo $w={102}><select aria-label="字体"><option>宋体 (正文)</option></select><Caret /></Combo>
              <Combo $w={43}><select aria-label="字号"><option>18</option></select><Caret /></Combo>
              <ButtonSet>
                <Tool $w={22} aria-label="增大字号"><Icon><path d="M2 14L6.500 3 11 14M4 10.500h5.500M1 14h3M9 14h3.500" stroke="#333" strokeWidth="1.700" /><path d="M11 4l2.500-3L16 4z" fill="#2b62c0" /></Icon></Tool>
                <Tool $w={22} aria-label="减小字号"><Icon><path d="M2.500 14L6 5.500 9.500 14M4 11h4M1.500 14h2.500M8 14h3" stroke="#333" strokeWidth="1.500" /><path d="M10 1l2.500 3L15 1z" fill="#2b62c0" /></Icon></Tool>
              </ButtonSet>
              <ButtonSet><Tool $w={22} aria-label="清除格式"><EraseIcon /></Tool></ButtonSet>
            </Row>
            <Row>
              <ButtonSet>
                <Tool aria-label="加粗"><Glyph $style="bold">B</Glyph></Tool>
                <Tool $w={24} aria-label="倾斜"><Glyph $style="italic">I</Glyph></Tool>
                <Tool $w={24} aria-label="下划线"><Glyph $style="underline">U</Glyph></Tool>
                <Tool $w={24} aria-label="删除线"><Glyph $size={12} $style="strike">abc</Glyph></Tool>
                <Tool $w={24} aria-label="阴影"><Glyph $style="shadow">S</Glyph></Tool>
                <Tool $w={30} aria-label="字符间距"><SpacingAvIcon /><Caret /></Tool>
                <Tool $w={31} aria-label="更改大小写"><Glyph>Aa</Glyph><Caret /></Tool>
              </ButtonSet>
              <ButtonSet><Tool $w={33} aria-label="字体颜色"><FontColorIcon /><Caret /></Tool></ButtonSet>
            </Row>
          </FontBody>
        </RibbonGroup>
        <RibbonGroup label="段落" w={287} launcher>
          <ParaBody>
            <Row>
              <ButtonSet>
                <Tool $w={33} aria-label="项目符号"><BulletIcon /><Caret /></Tool>
                <Tool $w={32} aria-label="编号"><BulletIcon numbered /><Caret /></Tool>
              </ButtonSet>
              <ButtonSet>
                <Tool $w={22} aria-label="减少缩进"><IndentIcon /></Tool>
                <Tool $w={21} aria-label="增加缩进"><IndentIcon more /></Tool>
              </ButtonSet>
              <ButtonSet><Tool $w={30} aria-label="行距"><LineSpacingIcon /><Caret /></Tool></ButtonSet>
            </Row>
            <Row>
              <ButtonSet>
                <Tool aria-label="左对齐"><AlignIcon kind="left" /></Tool>
                <Tool $on aria-label="居中"><AlignIcon kind="center" /></Tool>
                <Tool aria-label="右对齐"><AlignIcon kind="right" /></Tool>
                <Tool aria-label="两端对齐"><AlignIcon kind="justify" /></Tool>
                <Tool aria-label="分散对齐"><DistributeIcon /></Tool>
              </ButtonSet>
              <ButtonSet><Tool $w={31} aria-label="分栏"><ColumnsIcon /><Caret /></Tool></ButtonSet>
            </Row>
          </ParaBody>
          <Column>
            <SmallButton><TextDirIcon />文字方向<Caret /></SmallButton>
            <SmallButton><AlignTextIcon />对齐文本<Caret /></SmallButton>
            <SmallButton><SmartArtIcon />转换为 SmartArt<Caret /></SmallButton>
          </Column>
        </RibbonGroup>
        <RibbonGroup label="绘图" w={329}>
          <Gallery>
            <ShapeGrid>{shapes.map(([name, art]) => <button key={name} aria-label={name}><Icon>{art}</Icon></button>)}</ShapeGrid>
            <GalleryScroll>
              <button aria-label="上一行"><UpCaret /></button>
              <button aria-label="下一行"><Caret /></button>
              <button aria-label="其他形状"><Icon w={7} h={1}><path d="M0 .5h7" stroke="#567db1" /></Icon><Caret /></button>
            </GalleryScroll>
          </Gallery>
          <BigButton $w={44}><ArrangeIcon />排列<Caret /></BigButton>
          <BigButton $w={50}><QuickStyleIcon />快速样式<Caret /></BigButton>
          <FillAnchor>
            <FillButton aria-expanded="true"><BucketIcon />形状填充<Caret /></FillButton>
            <ColorMenu />
          </FillAnchor>
        </RibbonGroup>
        <RibbonGroup label="编辑" w={68}>
          <SideColumn><SmallButton><FindIcon />查找</SmallButton></SideColumn>
        </RibbonGroup>
      </Ribbon>

      <DocBar>
        <DocTab><PowerPointIcon />演示文稿1 [兼容模式]</DocTab>
        <DocClose aria-label="关闭文档"><CloseGlyph /></DocClose>
      </DocBar>

      <Body>
        <SlidesPane>
          <PaneTabs>
            <PaneTab $active>
              <svg width="62" height="20" aria-hidden="true"><path d="M0 0h43l5 3 10 14 4 3H0z" fill="#e3eefc" stroke="#7499cc" /></svg>
              幻灯片
            </PaneTab>
            <PaneTab>
              <svg width="62" height="20" aria-hidden="true"><path d="M0 0h42l4 3 10 14 4 3H6L0 12z" fill="#bdd3f2" stroke="#7499cc" /></svg>
              大纲
            </PaneTab>
            <PaneClose aria-label="关闭窗格"><CloseGlyph size={12} color="#47709f" /></PaneClose>
          </PaneTabs>
          <ThumbCard aria-label="幻灯片 1">
            <ThumbNumber>1</ThumbNumber>
            <ThumbSlide><ThumbShape /></ThumbSlide>
          </ThumbCard>
        </SlidesPane>
        <Splitter />
        <Editor>
          <Desk>
            <HRulerCell><HRuler><RulerMarks n={12} /></HRuler></HRulerCell>
            <VRulerCell><VRuler><RulerMarks n={9} vertical /></VRuler></VRulerCell>
            <Stage>
              <Sheen width="64" height="17" aria-hidden="true"><path d="M0 0h64L0 17z" fill="#cfe0f6" opacity=".7" /></Sheen>
              <Slide><SelectedShape><Handles /></SelectedShape></Slide>
            </Stage>
          </Desk>
          <NotesRow>
            <Notes aria-label="备注" defaultValue="单击此处添加备注" />
            <NotesScroll><span /><span /></NotesScroll>
          </NotesRow>
        </Editor>
      </Body>

      <StatusBar>
        <StatusCell $w={77} $pad={8}>幻灯片 1/1</StatusCell>
        <StatusCell $w={104} $pad={15}>“Office 主题”</StatusCell>
        <StatusCell $w={141} $pad={7}><SpellIcon />中文(简体，中国)</StatusCell>
        <StatusRight>
          <ViewButtons>
            <ViewButton $on aria-label="普通视图"><Icon w={12} h={11}><path d="M.5.5h11v10H.5zM4.500.5v10M6.500 3h3v3h-3z" stroke="#4a4a3c" /></Icon></ViewButton>
            <ViewButton aria-label="幻灯片浏览"><Icon w={12} h={11}><path d="M.5.5h4v3h-4zM7.500.5h4v3h-4zM.5 6.500h4v3h-4zM7.500 6.500h4v3h-4z" stroke="#3f4a5c" /></Icon></ViewButton>
            <ViewButton aria-label="幻灯片放映"><Icon w={12} h={11}><path d="M0 1h12M1.500 1v5h9V1M6 6v3M3 10.500h6M4 3.500h4" stroke="#3f4a5c" /></Icon></ViewButton>
          </ViewButtons>
          <span>77%</span>
          <IconButton aria-label="缩小"><Icon><circle cx="8" cy="8" r="7" fill="#dfeaf8" stroke="#41669f" /><path d="M4 8h8" stroke="#37557f" strokeWidth="2" /></Icon></IconButton>
          <ZoomSlider type="range" min={0} max={100} defaultValue={37} aria-label="缩放" />
          <IconButton aria-label="放大"><Icon><circle cx="8" cy="8" r="7" fill="#dfeaf8" stroke="#41669f" /><path d="M4 8h8M8 4v8" stroke="#37557f" strokeWidth="2" /></Icon></IconButton>
          <IconButton aria-label="适应窗口"><Icon w={18} h={16}><rect x="1.500" y=".5" width="15" height="15" rx="2" fill="#e8f0fa" stroke="#6b86ad" /><path d="M4 3l3 3M14 3l-3 3M4 13l3-3M14 13l-3-3" stroke="#444" /><path d="M3.500 5.500v-3h3M11.500 2.500h3v3M3.500 10.500v3h3M11.500 13.500h3v-3" stroke="#444" strokeDasharray="2 1" /></Icon></IconButton>
        </StatusRight>
      </StatusBar>

      <FloatBall>77</FloatBall>

      <Watermark>
        <MarkRow>
          <MarkLatin>Bai</MarkLatin>
          <svg width="76" height="84" viewBox="0 0 76 84" aria-hidden="true">
            <defs>
              <linearGradient id="du" gradientUnits="userSpaceOnUse" x1="0" y1="0" x2="76" y2="0">
                <stop offset="0.34" stopColor="#dde1e7" /><stop offset="0.34" stopColor="#41689f" />
              </linearGradient>
            </defs>
            <g fill="#fff">
              <ellipse cx="11" cy="34" rx="10" ry="13" /><ellipse cx="29" cy="16" rx="9" ry="13" />
              <ellipse cx="52" cy="17" rx="9" ry="12" transform="rotate(10 52 17)" /><ellipse cx="66" cy="40" rx="10" ry="12" />
              <path d="M38 36c8 0 11 5 16 13 7 10 16 12 16 23 0 12-10 13-18 12-9-1-16-1-24 0-10 1-22-1-22-13 0-10 8-14 14-22 6-9 10-13 18-13z" />
            </g>
            <text x="17" y="74" fill="url(#du)" fontFamily="Liberation Sans, sans-serif" fontSize="34" fontWeight="700">du</text>
          </svg>
          <MarkHan>经验</MarkHan>
        </MarkRow>
        <MarkUrl>jingyan.baidu.com</MarkUrl>
      </Watermark>

      <Annotations width="1440" height="858" fill="none" stroke="#f00" strokeWidth="3" aria-hidden="true">
        <rect x="56.500" y="21.500" width="74" height="37" />
        <rect x="981.500" y="44.500" width="105" height="36" />
        <rect x="996.500" y="102.500" width="26" height="19" />
        <path d="M145 48L955 67M776 378L153 84M990 83l9 13" />
        <g fill="#f00" stroke="none">
          <path d="M969 68l-18 6V61z" /><path d="M140 77l19 2-7 12z" /><path d="M1007 105l-14-8 11-9z" />
        </g>
      </Annotations>
    </Window>
  );
}
